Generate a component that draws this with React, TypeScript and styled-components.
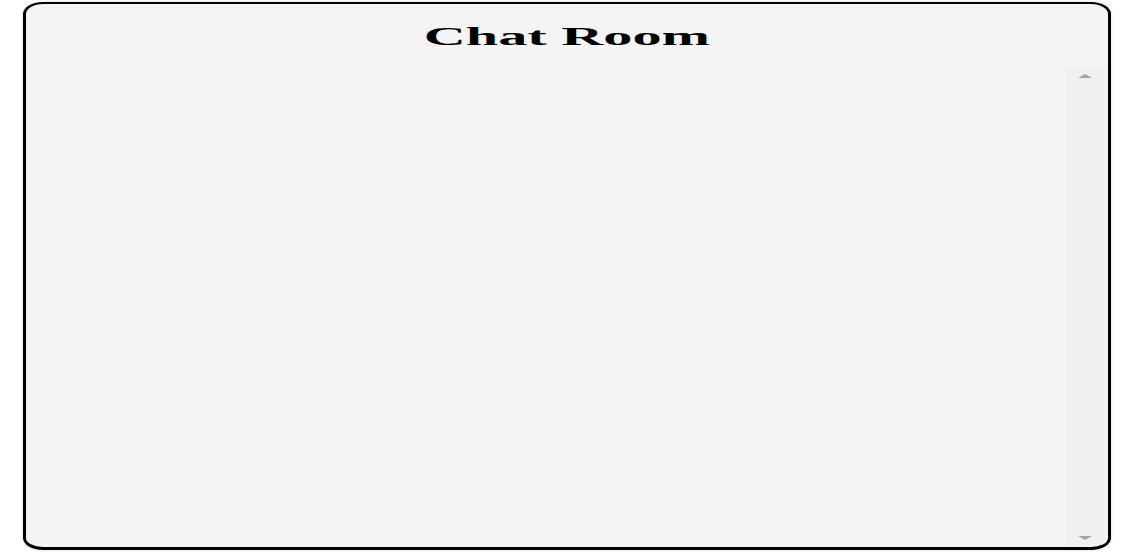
import React from "react";
import styled, { createGlobalStyle } from "styled-components";

const Global = createGlobalStyle`
  html, body { margin: 0; padding: 0; background: #ffffff; }
  body { font-family: "Liberation Serif", "Times New Roman", serif; }
`;

const Page = styled.div`
  padding: 2px 0 0 23px;
  width: 1133px;
  height: 558px;
  box-sizing: border-box;
`;

const Room = styled.section`
  width: 1088px;
  height: 548px;
  box-sizing: border-box;
  border-style: solid;
  border-color: #000;
  border-width: 2px 3px 3px 3px;
  border-radius: 20px / 12px;
  background: #f4f4f4;
  box-shadow: 0 0 3px rgba(0, 0, 0, 0.18);
  display: flex;
  flex-direction: column;
  overflow: hidden;
`;

const Title = styled.h2`
  margin: 0;
  padding: 18px 0 16px;
  line-height: 30px;
  font-size: 26px;
  font-weight: bold;
  text-align: center;
  color: #000;
`;

const Stretch = styled.span`
  display: inline-block;
  transform: scaleX(2.24);
  transform-origin: center;
`;

const Body = styled.div`
  flex: 1;
  min-height: 0;
  display: flex;
  margin: 0 2px 2px 0;
`;

const MessageList = styled.div`
  flex: 1;
  min-width: 0;
  overflow-y: auto;
  padding: 0 12px;
`;

const Rail = styled.div`
  width: 40px;
  flex: none;
  background: #f0f0f0;
  display: flex;
  flex-direction: column;
  justify-content: space-between;
  align-items: center;
`;

const RailButton = styled.button<{ $down?: boolean }>`
  width: 40px;
  height: 18px;
  padding: 0;
  border: 0;
  background: transparent;
  display: flex;
  justify-content: center;
  align-items: ${(p) => (p.$down ? "flex-end" : "flex-start")};
  padding-top: ${(p) => (p.$down ? "0" : "6px")};
  padding-bottom: ${(p) => (p.$down ? "5px" : "0")};
  padding-right: 3px;
  box-sizing: border-box;
  cursor: default;
`;

function Arrow({ down }: { down?: boolean }) {
  return (
    <svg width="14" height="4" viewBox="0 0 14 4">
      <path d={down ? "M0 0 L14 0 L7 4 Z" : "M0 4 L14 4 L7 0 Z"} fill="#a5a5a5" />
    </svg>
  );
}

export default function App() {
  return (
    <>
      <Global />
      <Page>
        <Room>
          <Title>
            <Stretch>Chat Room</Stretch>
          </Title>
          <Body>
            <MessageList />
            <Rail>
              <RailButton aria-label="Scroll up">
                <Arrow />
              </RailButton>
              <RailButton $down aria-label="Scroll down">
                <Arrow down />
              </RailButton>
            </Rail>
          </Body>
        </Room>
      </Page>
    </>
  );
}
